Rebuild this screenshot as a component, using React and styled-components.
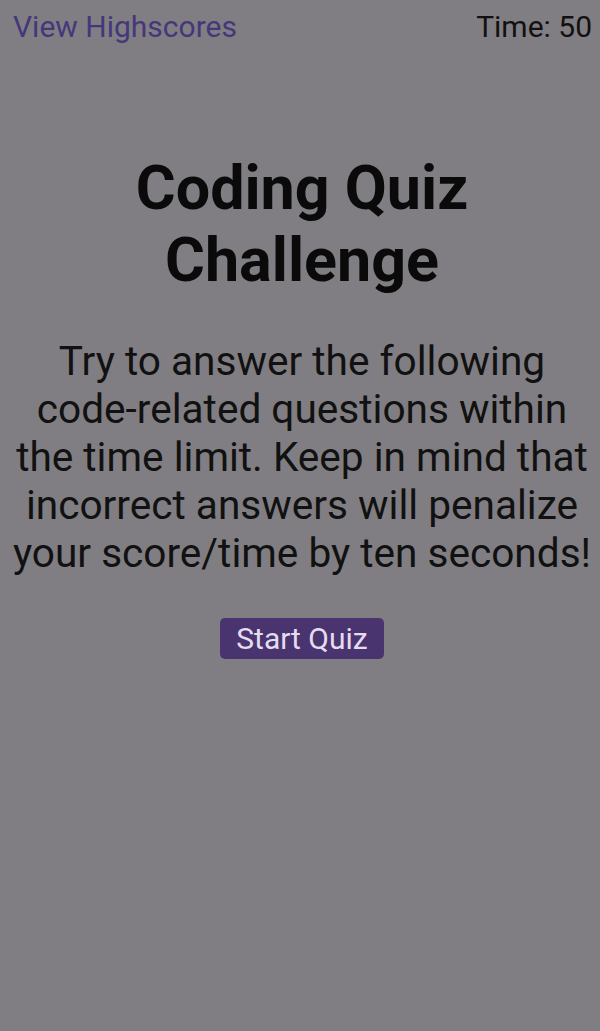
import React from 'react'
import styled, { createGlobalStyle } from 'styled-components'

const GlobalStyle = createGlobalStyle`
    html, body {
        margin: 0;
        padding: 0;
        background-color: #807e82;
    }
    body {
        font-family: Roboto, 'Liberation Sans', sans-serif;
    }
`;

const Page = styled.div`
    min-height: 1031px;
    background-color: #807e82;
`;

const Header = styled.header`
    display: flex;
    justify-content: space-between;
    align-items: center;
    padding: 7px 8px 0 13px;
    font-size: 30px;
    line-height: 40px;
`;

const HighscoreLink = styled.a`
    color: #45387a;
    text-decoration: none;
    cursor: pointer;
`;

const Timer = styled.div`
    color: #111;
`;

const Main = styled.main`
    display: flex;
    flex-direction: column;
    align-items: center;
    text-align: center;
    padding: 105px 8px 0 12px;
`;

const Title = styled.h1`
    margin: 0;
    font-size: 61px;
    font-weight: 700;
    line-height: 72px;
    color: #0a0a0a;
`;

const Intro = styled.p`
    margin: 41px 0 0;
    font-size: 40.6px;
    line-height: 48px;
    color: #111;
`;

const StartButton = styled.button`
    margin-top: 41px;
    padding: 0 16px;
    height: 41px;
    border: none;
    border-radius: 5px;
    background-color: #4a3470;
    color: #e4dcef;
    font-family: inherit;
    font-size: 30px;
    line-height: 41px;
    cursor: pointer;
`;

const App = () => {
    return (
        <Page>
            <GlobalStyle />
            <Header>
                <HighscoreLink>View Highscores</HighscoreLink>
                <Timer>Time: 50</Timer>
            </Header>
            <Main>
                <Title>Coding Quiz<br />Challenge</Title>
                <Intro>
                    Try to answer the following code-related questions within the time limit. Keep in mind that incorrect answers will penalize your score/time by ten seconds!
                </Intro>
                <StartButton>Start Quiz</StartButton>
            </Main>
        </Page>
    )
}

export default App
